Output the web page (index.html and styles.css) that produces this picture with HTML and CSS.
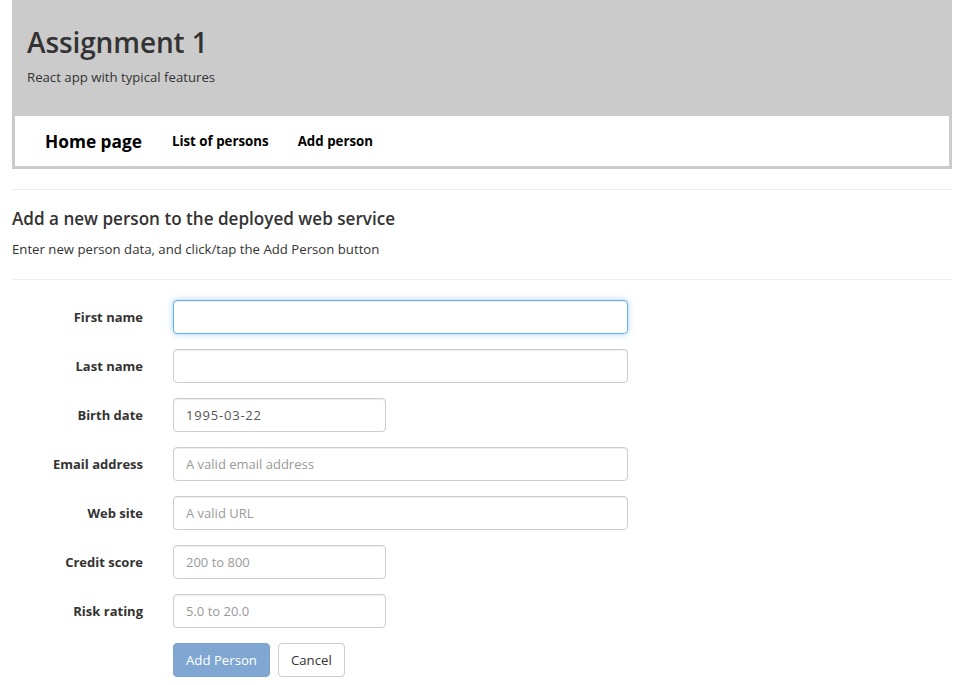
FILE: index.html
```html
<!DOCTYPE html>
<html lang="en">
<head>
<meta charset="utf-8">
<title>Assignment 1</title>
<link rel="stylesheet" href="styles.css">
</head>
<body>
<div class="container">
  <header class="masthead">
    <div class="banner">
      <h1 class="title">Assignment 1</h1>
      <p class="tagline">React app with typical features</p>
    </div>
    <nav class="navbar">
      <a class="brand" href="#">Home page</a>
      <a class="navlink" href="#">List of persons</a>
      <a class="navlink" href="#">Add person</a>
    </nav>
  </header>

  <hr class="rule">
  <h4 class="heading">Add a new person to the deployed web service</h4>
  <p class="intro">Enter new person data, and click/tap the Add Person button</p>
  <hr class="rule rule-low">

  <form class="form">
    <label class="label" for="fn">First name</label>
    <div class="field"><input id="fn" class="input wide focused" type="text"></div>

    <label class="label" for="ln">Last name</label>
    <div class="field"><input id="ln" class="input wide" type="text"></div>

    <label class="label" for="bd">Birth date</label>
    <div class="field"><input id="bd" class="input narrow date" type="text" value="1995-03-22"></div>

    <label class="label" for="em">Email address</label>
    <div class="field"><input id="em" class="input wide" type="text" placeholder="A valid email address"></div>

    <label class="label" for="ws">Web site</label>
    <div class="field"><input id="ws" class="input wide" type="text" placeholder="A valid URL"></div>

    <label class="label" for="cs">Credit score</label>
    <div class="field"><input id="cs" class="input narrow" type="text" placeholder="200 to 800"></div>

    <label class="label" for="rr">Risk rating</label>
    <div class="field"><input id="rr" class="input narrow" type="text" placeholder="5.0 to 20.0"></div>

    <span class="label"></span>
    <div class="field actions">
      <button type="button" class="btn btn-primary" disabled>Add Person</button>
      <button type="button" class="btn btn-default">Cancel</button>
    </div>
  </form>
</div>
</body>
</html>
```

FILE: styles.css
```css
* { box-sizing: border-box; }

html, body {
  margin: 0;
  padding: 0;
  background: #fff;
}

body {
  font-family: "Open Sans", "Noto Sans", sans-serif;
  font-size: 13px;
  line-height: 20px;
  color: #333;
}

.container {
  width: 940px;
  margin-left: 12px;
}

.masthead {
  background: #cbcbcb;
  padding: 0 3px 3px;
}

.banner {
  height: 116px;
  padding: 23px 0 0 12px;
}

.title {
  margin: 0;
  font-size: 28px;
  line-height: 38px;
  font-weight: 600;
  color: #333;
  letter-spacing: -0.1px;
}

.tagline {
  margin: 7px 0 0;
  font-size: 13.2px;
  line-height: 18px;
  color: #333;
}

.navbar {
  background: #fff;
  height: 50px;
  display: flex;
  align-items: center;
  padding-left: 30px;
}

.brand {
  font-size: 17.3px;
  font-weight: 700;
  color: #000;
  text-decoration: none;
  margin-right: 30px;
  padding-top: 2px;
}

.navlink {
  font-size: 13.3px;
  font-weight: 700;
  color: #000;
  text-decoration: none;
  margin-right: 29px;
}

.rule {
  border: 0;
  border-top: 1px solid #eee;
  margin: 20px 0 0;
  height: 0;
}

.rule-low {
  margin-top: 20px;
}

.heading {
  margin: 18px 0 0;
  font-size: 17.1px;
  line-height: 22px;
  font-weight: 600;
  color: #333;
}

.intro {
  margin: 9px 0 0;
  font-size: 13.2px;
  line-height: 20px;
}

.form {
  display: grid;
  grid-template-columns: 131px 455px;
  column-gap: 30px;
  row-gap: 15px;
  margin: 20px 0 0;
}

.label {
  text-align: right;
  font-weight: 700;
  font-size: 13px;
  line-height: 34px;
  color: #333;
}

.field {
  display: flex;
}

.input {
  height: 34px;
  padding: 6px 12px;
  font-family: inherit;
  font-size: 13px;
  color: #555;
  background: #fff;
  border: 1px solid #ccc;
  border-radius: 4px;
  box-shadow: inset 0 1px 1px rgba(0,0,0,.075);
  outline: none;
}

.input::placeholder {
  color: #999;
}

.wide { width: 455px; }
.narrow { width: 213px; }

.date {
  color: #555;
  letter-spacing: 0.8px;
}

.focused {
  border-color: #66afe9;
  box-shadow: inset 0 1px 1px rgba(0,0,0,.075), 0 0 6px rgba(102,175,233,.6);
}

.actions {
  gap: 8px;
}

.btn {
  height: 34px;
  padding: 6px 12px;
  font-family: inherit;
  font-size: 13.2px;
  line-height: 20px;
  border-radius: 4px;
  border: 1px solid transparent;
}

.btn-primary {
  background: #7fa7d1;
  border-color: #7ba3cd;
  color: #fff;
}

.btn-default {
  background: #fff;
  border-color: #ccc;
  color: #333;
}
```
